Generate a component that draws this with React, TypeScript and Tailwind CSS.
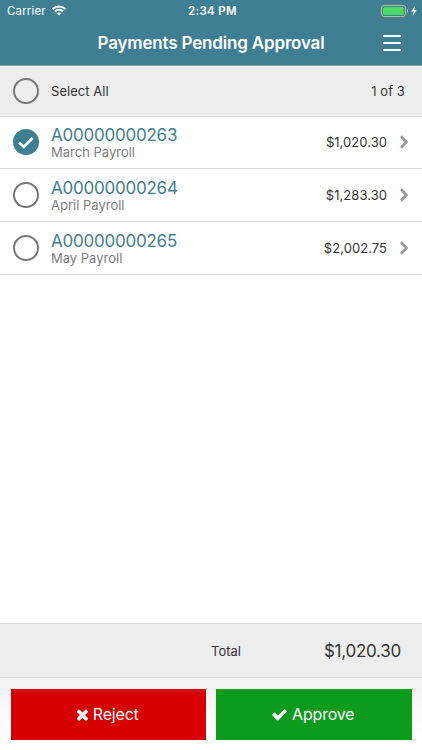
import { useState } from "react";

const payments = [
  { id: "A00000000263", name: "March Payroll", amount: "$1,020.30", height: "h-[52px] pb-px" },
  { id: "A00000000264", name: "April Payroll", amount: "$1,283.30", height: "h-[53px]" },
  { id: "A00000000265", name: "May Payroll", amount: "$2,002.75", height: "h-[53px]" },
];

function StatusBar() {
  return (
    <div className="grid h-[21px] grid-cols-3 items-center pt-[2px] text-[11.5px] leading-none">
      <div className="flex items-center gap-[6px] pl-[7px]">
        <span className="tracking-[0.15px]">Carrier</span>
        <svg className="mb-[2px] h-[11px] w-[14px]" viewBox="0 0 14 11" fill="none" stroke="currentColor" strokeWidth="2">
          <path d="M0.6 4.1C4.2 0.6 9.8 0.6 13.4 4.1" />
          <path d="M2.9 6.5C5.2 4.3 8.8 4.3 11.1 6.5" />
          <path d="M7 10.6L4.7 8.3C6 7.2 8 7.2 9.3 8.3Z" fill="currentColor" stroke="none" />
        </svg>
      </div>
      <span className="pl-[3px] text-center font-semibold tracking-[0.35px]">2:34 PM</span>
      <div className="flex items-center justify-end pr-[5px] pb-[2px]">
        <div className="h-[12px] w-[25px] rounded-[3px] border border-[#b9c39a] p-px">
          <div className="h-full rounded-[1.5px] bg-[#4cd964]" />
        </div>
        <div className="ml-px h-[4px] w-[1.5px] rounded-r bg-[#b9c39a]" />
        <svg className="ml-[3px] h-[10px] w-[6px]" viewBox="0 0 6 10" fill="currentColor">
          <path d="M4 0L0.2 5.6H2.6L1.6 10L5.8 4.1H3.3Z" />
        </svg>
      </div>
    </div>
  );
}

function Radio({ checked }: { checked: boolean }) {
  if (!checked) {
    return <span className="block size-[26px] rounded-full border-2 border-[#777]" />;
  }
  return (
    <span className="block size-[26px] rounded-full bg-[#3f7f93]">
      <svg className="size-[26px]" viewBox="0 0 26 26" fill="none" stroke="white" strokeWidth="2.6">
        <path d="M6.2 13.6L10.9 18L19.6 9" />
      </svg>
    </span>
  );
}

export default function App() {
  const [selected, setSelected] = useState<string[]>(["A00000000263"]);

  const toggle = (id: string) => {
    setSelected(selected.includes(id) ? selected.filter((s) => s !== id) : [...selected, id]);
  };

  return (
    <div className="flex h-[750px] w-[422px] flex-col overflow-hidden bg-white font-['Inter',sans-serif] text-[#333]">
      <header className="h-[66px] border-b border-[#8aa9b3] bg-[#3f7f93] text-white">
        <StatusBar />
        <div className="flex h-[44px] items-center pr-[21px] pl-[39px]">
          <h1 className="flex-1 text-center text-[17px] leading-none font-semibold tracking-[-0.17px]">
            Payments Pending Approval
          </h1>
          <button className="flex w-[18px] flex-col gap-[5px]">
            <span className="h-[2px] bg-white" />
            <span className="h-[2px] bg-white" />
            <span className="h-[2px] bg-white" />
          </button>
        </div>
      </header>

      <div className="flex h-[51px] items-center border-b border-[#d9d9d9] bg-[#ededed] pr-[17px] pl-[13px] text-[13px]">
        <Radio checked={selected.length === payments.length} />
        <span className="ml-[12px] flex-1 pt-px tracking-[0.05px]">Select All</span>
        <span className="pt-px tracking-[0.1px]">
          {selected.length} of {payments.length}
        </span>
      </div>

      <main className="flex-1">
        {payments.map((p) => (
          <div
            key={p.id}
            onClick={() => toggle(p.id)}
            className={`flex items-center border-b border-[#dcdcdc] pr-[14px] pl-[13px] ${p.height}`}
          >
            <Radio checked={selected.includes(p.id)} />
            <div className="ml-[12px] flex-1 pt-[2px]">
              <div className="text-[17px] leading-[18px] tracking-[-0.23px] text-[#3f7f8c]">{p.id}</div>
              <div className="text-[13px] leading-[17px] text-[#808080]">{p.name}</div>
            </div>
            <span className="pt-px text-[13px] tracking-[0.05px]">{p.amount}</span>
            <svg className="ml-[13px] h-[14px] w-[8px]" viewBox="0 0 8 14" fill="none" stroke="#999" strokeWidth="2.8">
              <path d="M1 1.2L6.4 7L1 12.8" />
            </svg>
          </div>
        ))}
      </main>

      <div className="flex h-[55px] items-center border-y border-[#dcdcdc] bg-[#ededed] pt-[2px] pr-[21px]">
        <span className="ml-[211px] flex-1 text-[13px]">Total</span>
        <span className="text-[17px] tracking-[-0.25px]">$1,020.30</span>
      </div>

      <footer className="grid h-[72px] grid-cols-2 gap-[10px] bg-linear-to-b from-[#f2f2f2] to-white to-80% px-[10.5px] pt-[10.5px] pb-[10.5px] text-[16px] text-white">
        <button className="flex items-center justify-center gap-[2px] bg-[#d60000] pr-[4px] tracking-[-0.2px]">
          <svg className="size-[17px]" viewBox="0 0 1792 1792" fill="currentColor">
            <path d="M1490 1322q0 40-28 68l-136 136q-28 28-68 28t-68-28l-294-294-294 294q-28 28-68 28t-68-28l-136-136q-28-28-28-68t28-68l294-294-294-294q-28-28-28-68t28-68l136-136q28-28 68-28t68 28l294 294 294-294q28-28 68-28t68 28l136 136q28 28 28 68t-28 68l-294 294 294 294q28 28 28 68z" />
          </svg>
          Reject
        </button>
        <button className="flex items-center justify-center gap-[4px] bg-[#0c9b1d] pr-[2px] tracking-[-0.2px]">
          <svg className="size-[17px]" viewBox="0 0 1792 1792" fill="currentColor">
            <path d="M1671 566q0 40-28 68l-724 724-136 136q-28 28-68 28t-68-28l-136-136-362-362q-28-28-28-68t28-68l136-136q28-28 68-28t68 28l294 295 656-657q28-28 68-28t68 28l136 136q28 28 28 68z" />
          </svg>
          Approve
        </button>
      </footer>
    </div>
  );
}
